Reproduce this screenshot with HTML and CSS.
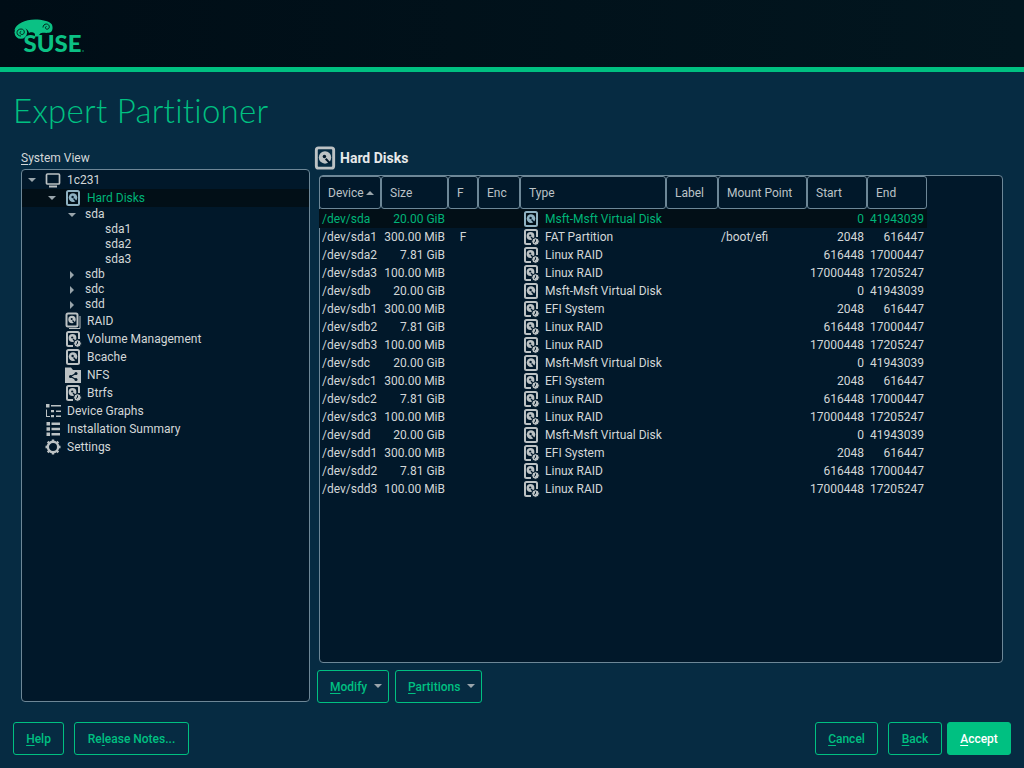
FILE: index.html
```html
<!DOCTYPE html>
<html lang="en">
<head>
<meta charset="utf-8">
<title>Expert Partitioner</title>
<link rel="stylesheet" href="styles.css">
</head>
<body>
<svg class="defs" width="0" height="0" aria-hidden="true">
  <symbol id="disk" viewBox="0 0 18 18">
    <rect x="3" y="2" width="12" height="14" rx="1.5" fill="none" stroke="currentColor" stroke-width="2"/>
    <circle cx="9" cy="8.6" r="4.3" fill="currentColor"/>
    <circle cx="8.6" cy="8" r="1.2" fill="#01182a"/>
    <path d="M9.5 9.5l3 3.2" stroke="#01182a" stroke-width="1.4"/>
  </symbol>
  <symbol id="disk-sub" viewBox="0 0 18 18">
    <path d="M9 16H4.5A1.5 1.5 0 0 1 3 14.5v-11A1.500 1.500 0 0 1 4.500 2h9A1.500 1.500 0 0 1 15 3.500V9" fill="none" stroke="currentColor" stroke-width="2"/>
    <circle cx="8.500" cy="8" r="3.900" fill="currentColor"/>
    <circle cx="8.200" cy="7.500" r="1.100" fill="#01182a"/>
    <path d="M9 9l2.500 2.800" stroke="#01182a" stroke-width="1.300"/>
    <circle cx="13.500" cy="13.500" r="3.800" fill="currentColor" stroke="#01182a"/>
    <path d="M13.500 11.500v2l-1.500 1" fill="none" stroke="#01182a"/>
  </symbol>
  <symbol id="disk-raid" viewBox="0 0 18 18">
    <path d="M16 4v12.500H5" fill="none" stroke="currentColor"/>
    <rect x="2.500" y="1.500" width="11" height="13" rx="1.500" fill="none" stroke="currentColor" stroke-width="2"/>
    <circle cx="8" cy="7.500" r="3.700" fill="currentColor"/>
    <circle cx="7.700" cy="7" r="1.100" fill="#01182a"/>
    <path d="M8.500 8.500l2.300 2.500" stroke="#01182a" stroke-width="1.200"/>
  </symbol>
</svg>

<header class="topbar">
  <svg class="logo" width="72" height="36" viewBox="0 0 72 36" role="img" aria-label="SUSE">
    <path class="logo-body" d="M.5 11C2 5 11 .5 21 .5c7 0 14 1.500 16.500 4.500 1.500 2 1.500 6.500-.5 8-2.500 1.500-7 .5-9.500 1-2 .5-2.500 2-3 3.500h-4c1-2 .5-3.500-1.500-4-2-.5-3.500 0-4 .5C14.500 11 11 8.500 8 8.800 3.500 9.300.5 12 .5 11z"/>
    <circle class="logo-body" cx="6.800" cy="13.500" r="6.300"/>
    <path class="logo-cut" d="M7 17c-2.500 0-4-1.500-4-3.500S4.700 10 7 10c2 0 3.300 1.300 3.300 3 0 1.500-1 2.500-2.300 2.500-1.200 0-2-.8-2-1.800 0-.8.500-1.300 1.200-1.300"/>
    <path class="logo-cut" d="M29 8.500c0-2 1.500-3.500 3.300-3.500s3 1.300 3 2.800c0 1.500-1 2.400-2.200 2.400-1 0-1.700-.7-1.700-1.500 0-.7.500-1.200 1.100-1.200"/>
    <text class="logo-text" x="9.500" y="32.500" textLength="58" lengthAdjust="spacingAndGlyphs">SUSE</text>
    <circle class="logo-body" cx="69" cy="32" r=".7"/>
  </svg>
</header>

<h1 class="page-title">Expert Partitioner</h1>

<main class="workspace">
  <section class="left-pane">
    <div class="pane-label"><u>S</u>ystem View</div>
    <div class="tree">
      <div class="node node-i lvl0">
        <span class="arrow down"></span>
        <svg class="ico" viewBox="0 0 18 18"><path d="M3.500 3h11a1 1 0 0 1 1 1v8a1 1 0 0 1-1 1h-11a1 1 0 0 1-1-1V4a1 1 0 0 1 1-1z" fill="none" stroke="currentColor" stroke-width="1.700"/><path d="M5 15.500h8" stroke="currentColor" stroke-width="2"/></svg>
        <span>1c231</span>
      </div>
      <div class="node node-i lvl1 selected">
        <span class="arrow down"></span>
        <svg class="ico ico-sel"><use href="#disk"/></svg>
        <span>Hard Disks</span>
      </div>
      <div class="node lvl2"><span class="arrow down"></span><span>sda</span></div>
      <div class="node lvl3"><span>sda1</span></div>
      <div class="node lvl3"><span>sda2</span></div>
      <div class="node lvl3"><span>sda3</span></div>
      <div class="node lvl2"><span class="arrow right"></span><span>sdb</span></div>
      <div class="node lvl2"><span class="arrow right"></span><span>sdc</span></div>
      <div class="node lvl2"><span class="arrow right"></span><span>sdd</span></div>
      <div class="node node-i lvl1"><span class="arrow none"></span><svg class="ico"><use href="#disk-raid"/></svg><span>RAID</span></div>
      <div class="node node-i lvl1"><span class="arrow none"></span><svg class="ico"><use href="#disk-sub"/></svg><span>Volume Management</span></div>
      <div class="node node-i lvl1"><span class="arrow none"></span><svg class="ico"><use href="#disk"/></svg><span>Bcache</span></div>
      <div class="node node-i lvl1"><span class="arrow none"></span>
        <svg class="ico" viewBox="0 0 18 18"><path d="M1 1.500h6l2 2.500h8v13H1z" fill="currentColor"/><path d="M12 7.500l-5.500 3 5.500 3" fill="none" stroke="#01182a" stroke-width="1.200"/><circle cx="12" cy="7.500" r="1.500" fill="#01182a"/><circle cx="6.500" cy="10.500" r="1.500" fill="#01182a"/><circle cx="12" cy="13.500" r="1.500" fill="#01182a"/></svg>
        <span>NFS</span></div>
      <div class="node node-i lvl1"><span class="arrow none"></span><svg class="ico"><use href="#disk-sub"/></svg><span>Btrfs</span></div>
      <div class="node node-i lvl0"><span class="arrow none"></span>
        <svg class="ico" viewBox="0 0 18 18"><path d="M2 2h3.500v3.500H2zM7 3h10v1.500H7zM2 7.500h1v6.500h3v1H2zM7 8h3v2.200H7zM12 8.500h5V10h-5zM7 13h3v2.200H7zM12 13.500h5V15h-5z" fill="currentColor"/></svg>
        <span>Device Graphs</span></div>
      <div class="node node-i lvl0"><span class="arrow none"></span>
        <svg class="ico" viewBox="0 0 18 18"><path d="M2.500 2h3.500v3.500H2.500zM7.500 2.500H16V5H7.500zM2.500 7.200h3.500v3.500H2.500zM7.500 7.700H16v2.500H7.500zM2.500 12.500h3.500V16H2.500zM7.500 13H16v2.500H7.500z" fill="currentColor"/></svg>
        <span>Installation Summary</span></div>
      <div class="node node-i lvl0"><span class="arrow none"></span>
        <svg class="ico" viewBox="0 0 18 18"><circle cx="9" cy="9" r="5.200" fill="none" stroke="currentColor" stroke-width="2.400"/><path d="M9 1.500v2.500M9 14v2.500M1.500 9H4M14 9h2.500M3.700 3.700l1.800 1.800M12.500 12.500l1.800 1.800M3.700 14.300l1.800-1.800M12.500 5.500l1.800-1.800" stroke="currentColor" stroke-width="2.400"/></svg>
        <span>Settings</span></div>
    </div>
  </section>

  <section class="right-pane">
    <h2 class="pane-heading"><svg class="heading-ico"><use href="#disk"/></svg><span>Hard Disks</span></h2>
    <div class="table-box">
      <table class="disks">
        <colgroup>
          <col class="c-dev"><col class="c-size"><col class="c-f"><col class="c-enc"><col class="c-type"><col class="c-label"><col class="c-mount"><col class="c-start"><col class="c-end">
        </colgroup>
        <thead>
          <tr><th>Device<span class="sort"></span></th><th>Size</th><th>F</th><th>Enc</th><th>Type</th><th>Label</th><th>Mount Point</th><th>Start</th><th>End</th></tr>
        </thead>
        <tbody>
          <tr class="selected"><td>/dev/sda</td><td class="r">20.00 GiB</td><td class="ctr"></td><td></td><td><div class="type"><svg class="ico ico-sel"><use href="#disk"/></svg>Msft-Msft Virtual Disk</div></td><td></td><td></td><td class="r">0</td><td class="r">41943039</td></tr>
          <tr><td>/dev/sda1</td><td class="r">300.00 MiB</td><td class="ctr">F</td><td></td><td><div class="type"><svg class="ico"><use href="#disk-sub"/></svg>FAT Partition</div></td><td></td><td>/boot/efi</td><td class="r">2048</td><td class="r">616447</td></tr>
          <tr><td>/dev/sda2</td><td class="r">7.81 GiB</td><td class="ctr"></td><td></td><td><div class="type"><svg class="ico"><use href="#disk-sub"/></svg>Linux RAID</div></td><td></td><td></td><td class="r">616448</td><td class="r">17000447</td></tr>
          <tr><td>/dev/sda3</td><td class="r">100.00 MiB</td><td class="ctr"></td><td></td><td><div class="type"><svg class="ico"><use href="#disk-sub"/></svg>Linux RAID</div></td><td></td><td></td><td class="r">17000448</td><td class="r">17205247</td></tr>
          <tr><td>/dev/sdb</td><td class="r">20.00 GiB</td><td class="ctr"></td><td></td><td><div class="type"><svg class="ico"><use href="#disk"/></svg>Msft-Msft Virtual Disk</div></td><td></td><td></td><td class="r">0</td><td class="r">41943039</td></tr>
          <tr><td>/dev/sdb1</td><td class="r">300.00 MiB</td><td class="ctr"></td><td></td><td><div class="type"><svg class="ico"><use href="#disk-sub"/></svg>EFI System</div></td><td></td><td></td><td class="r">2048</td><td class="r">616447</td></tr>
          <tr><td>/dev/sdb2</td><td class="r">7.81 GiB</td><td class="ctr"></td><td></td><td><div class="type"><svg class="ico"><use href="#disk-sub"/></svg>Linux RAID</div></td><td></td><td></td><td class="r">616448</td><td class="r">17000447</td></tr>
          <tr><td>/dev/sdb3</td><td class="r">100.00 MiB</td><td class="ctr"></td><td></td><td><div class="type"><svg class="ico"><use href="#disk-sub"/></svg>Linux RAID</div></td><td></td><td></td><td class="r">17000448</td><td class="r">17205247</td></tr>
          <tr><td>/dev/sdc</td><td class="r">20.00 GiB</td><td class="ctr"></td><td></td><td><div class="type"><svg class="ico"><use href="#disk"/></svg>Msft-Msft Virtual Disk</div></td><td></td><td></td><td class="r">0</td><td class="r">41943039</td></tr>
          <tr><td>/dev/sdc1</td><td class="r">300.00 MiB</td><td class="ctr"></td><td></td><td><div class="type"><svg class="ico"><use href="#disk-sub"/></svg>EFI System</div></td><td></td><td></td><td class="r">2048</td><td class="r">616447</td></tr>
          <tr><td>/dev/sdc2</td><td class="r">7.81 GiB</td><td class="ctr"></td><td></td><td><div class="type"><svg class="ico"><use href="#disk-sub"/></svg>Linux RAID</div></td><td></td><td></td><td class="r">616448</td><td class="r">17000447</td></tr>
          <tr><td>/dev/sdc3</td><td class="r">100.00 MiB</td><td class="ctr"></td><td></td><td><div class="type"><svg class="ico"><use href="#disk-sub"/></svg>Linux RAID</div></td><td></td><td></td><td class="r">17000448</td><td class="r">17205247</td></tr>
          <tr><td>/dev/sdd</td><td class="r">20.00 GiB</td><td class="ctr"></td><td></td><td><div class="type"><svg class="ico"><use href="#disk"/></svg>Msft-Msft Virtual Disk</div></td><td></td><td></td><td class="r">0</td><td class="r">41943039</td></tr>
          <tr><td>/dev/sdd1</td><td class="r">300.00 MiB</td><td class="ctr"></td><td></td><td><div class="type"><svg class="ico"><use href="#disk-sub"/></svg>EFI System</div></td><td></td><td></td><td class="r">2048</td><td class="r">616447</td></tr>
          <tr><td>/dev/sdd2</td><td class="r">7.81 GiB</td><td class="ctr"></td><td></td><td><div class="type"><svg class="ico"><use href="#disk-sub"/></svg>Linux RAID</div></td><td></td><td></td><td class="r">616448</td><td class="r">17000447</td></tr>
          <tr><td>/dev/sdd3</td><td class="r">100.00 MiB</td><td class="ctr"></td><td></td><td><div class="type"><svg class="ico"><use href="#disk-sub"/></svg>Linux RAID</div></td><td></td><td></td><td class="r">17000448</td><td class="r">17205247</td></tr>
        </tbody>
      </table>
    </div>
    <div class="table-actions">
      <button class="btn btn-menu btn-modify"><span><u>M</u>odify</span><span class="caret"></span></button>
      <button class="btn btn-menu btn-partitions"><span><u>P</u>artitions</span><span class="caret"></span></button>
    </div>
  </section>
</main>

<footer class="footer">
  <div class="btn-group">
    <button class="btn btn-help"><span><u>H</u>elp</span></button>
    <button class="btn btn-notes"><span>Re<u>l</u>ease Notes...</span></button>
  </div>
  <div class="btn-group nav">
    <button class="btn btn-cancel"><span><u>C</u>ancel</span></button>
    <button class="btn btn-back"><span><u>B</u>ack</span></button>
    <button class="btn btn-primary"><span><u>A</u>ccept</span></button>
  </div>
</footer>
</body>
</html>
```
FILE: styles.css
```css
* { box-sizing: border-box; }
html, body { margin: 0; padding: 0; }
body {
  width: 1024px;
  height: 768px;
  overflow: hidden;
  display: flex;
  flex-direction: column;
  background: #062b42;
  color: #d3d7d8;
  font: 12px/15px Roboto, "Liberation Sans", sans-serif;
}
.defs { position: absolute; }
u { text-underline-offset: 2px; }

.topbar {
  height: 72px;
  flex: none;
  background: linear-gradient(90deg, #000d16, #02161f);
  border-bottom: 5px solid #00c081;
  padding: 19px 0 0 14px;
}
.logo { display: block; }
.logo-body { fill: #0bc184; }
.logo-cut { fill: none; stroke: #03281f; stroke-width: 1; }
.logo-text { fill: #0bc184; font: 900 22px Lato, "Liberation Sans", sans-serif; }

.page-title {
  flex: none;
  height: 75px;
  margin: 0;
  padding: 18px 0 0 13px;
  color: #00c081;
  font: 300 33px/40px Lato, "Open Sans", sans-serif;
  letter-spacing: .25px;
}

.workspace {
  flex: none;
  display: flex;
  height: 556px;
  padding-left: 21px;
}
.left-pane { width: 289px; display: flex; flex-direction: column; padding-top: 4px; }
.pane-label { height: 18px; line-height: 15px; }
.tree {
  height: 533px;
  background: #01182a;
  border: 1px solid #6d8797;
  border-radius: 4px;
  padding-top: 1px;
}
.node { display: flex; align-items: center; height: 15px; color: #d3d7d8; }
.node-i { height: 18px; }
.lvl0 { padding-left: 6px; }
.lvl1 { padding-left: 26px; }
.lvl2 { padding-left: 46px; }
.lvl3 { padding-left: 83px; }
.node.selected { background: #020f17; color: #00b478; }
.arrow { flex: none; width: 10px; height: 8px; position: relative; }
.arrow.none { visibility: hidden; }
.arrow.down::before {
  content: ""; position: absolute; left: 0; top: 2px;
  border-left: 4px solid transparent; border-right: 4px solid transparent; border-top: 4px solid #9aa5ab;
}
.arrow.right::before {
  content: ""; position: absolute; left: 2px; top: 0;
  border-top: 4px solid transparent; border-bottom: 4px solid transparent; border-left: 4px solid #9aa5ab;
}
.lvl0 .ico, .lvl1 .ico { margin-left: 6px; margin-right: 5px; }
.lvl2 .arrow { margin-right: 7px; }
.ico { flex: none; width: 18px; height: 18px; color: #bcc2c4; }
.ico-sel { color: #8fb2c2; }

.right-pane { width: 688px; margin-left: 5px; display: flex; flex-direction: column; }
.pane-heading {
  height: 28px;
  margin: 0;
  display: flex;
  align-items: center;
  padding-bottom: 6px;
  color: #e6e9ea;
  font: 700 14px/18px Roboto, sans-serif;
}
.heading-ico { width: 26px; height: 26px; margin: 0 0 0 -3px; color: #bcc2c4; flex: none; overflow: visible; }
.pane-heading span { margin-left: 2px; }
.table-box {
  height: 488px;
  margin-left: 4px;
  background: #01182a;
  border: 1px solid #6d8797;
  border-radius: 4px;
}
.disks { border-collapse: separate; border-spacing: 0; table-layout: fixed; width: 608px; margin-left: -1px; }
.c-dev { width: 62px; } .c-size { width: 67px; } .c-f { width: 30px; } .c-enc { width: 42px; }
.c-type { width: 146px; } .c-label { width: 52px; } .c-mount { width: 89px; }
.c-start { width: 60px; } .c-end { width: 60px; }
.disks th {
  height: 33px;
  padding: 1px 0 0 8px;
  text-align: left;
  font-weight: 400;
  color: #bcc3c7;
  border: 1px solid #6d8797;
  border-radius: 3px;
  white-space: nowrap;
}
.sort {
  display: inline-block; margin-left: 2px; vertical-align: 2px;
  border-left: 4px solid transparent; border-right: 4px solid transparent; border-bottom: 4px solid #9aa5ab;
}
.disks td { height: 18px; padding: 0 3px; white-space: nowrap; overflow: hidden; color: #d3d7d8; }
.disks td.r { text-align: right; }
.disks td.ctr { text-align: center; }
.disks tr.selected td { height: 19px; padding-top: 1px; background: #020f17; color: #00b478; }
.type { display: flex; align-items: center; gap: 5px; height: 18px; margin-left: -1px; }

.table-actions { display: flex; gap: 6px; padding: 7px 0 0 2px; }
.btn {
  height: 33px;
  padding: 1px 0 0;
  background: transparent;
  border: 1px solid #00c081;
  border-radius: 3px;
  color: #00c081;
  font: 500 12px/15px Roboto, sans-serif;
  display: flex;
  align-items: center;
  justify-content: center;
}
.btn-menu { gap: 7px; padding: 1px 6px 0 12px; justify-content: space-between; }
.btn-modify { width: 72px; } .btn-partitions { width: 87px; }
.caret { border-left: 4px solid transparent; border-right: 4px solid transparent; border-top: 4px solid #9aa5ab; margin-top: -3px; }
.footer { flex: none; display: flex; justify-content: space-between; padding: 19px 13px 0; }
.btn-group { display: flex; gap: 10px; }
.btn-help { width: 51px; } .btn-notes { width: 115px; }
.btn-cancel { width: 63px; } .btn-back { width: 54px; }
.btn-primary { width: 64px; margin-left: -5px; background: #00c081; color: #fff; }
```
